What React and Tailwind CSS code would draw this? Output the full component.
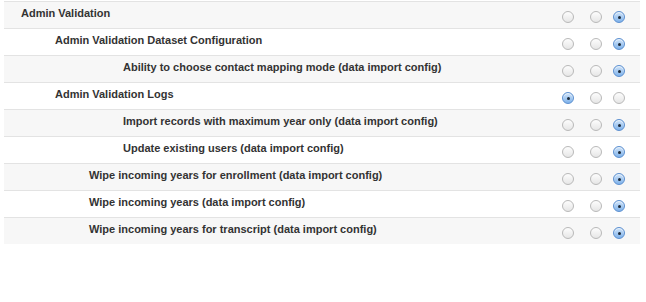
import React from "react";

const rows = [
  { label: "Admin Validation", indent: "pl-[17px]", checked: 2 },
  { label: "Admin Validation Dataset Configuration", indent: "pl-[51px]", checked: 2 },
  { label: "Ability to choose contact mapping mode (data import config)", indent: "pl-[119px]", checked: 2 },
  { label: "Admin Validation Logs", indent: "pl-[51px]", checked: 0 },
  { label: "Import records with maximum year only (data import config)", indent: "pl-[119px]", checked: 2 },
  { label: "Update existing users (data import config)", indent: "pl-[119px]", checked: 2 },
  { label: "Wipe incoming years for enrollment (data import config)", indent: "pl-[85px]", checked: 2 },
  { label: "Wipe incoming years (data import config)", indent: "pl-[85px]", checked: 2 },
  { label: "Wipe incoming years for transcript (data import config)", indent: "pl-[85px]", checked: 2 },
];

function Radio({ on }) {
  if (on) {
    return (
      <span className="flex h-[12px] w-[12px] items-center justify-center rounded-full border border-[#5b8fd0] bg-gradient-to-b from-[#cfe3f8] to-[#7fb2ea] shadow-[inset_0_1px_1px_rgba(255,255,255,0.7)]">
        <span className="h-[3px] w-[3px] rounded-full bg-[#1c2a3a]" />
      </span>
    );
  }
  return (
    <span className="block h-[12px] w-[12px] rounded-full border border-[#b9b9b9] bg-gradient-to-b from-[#fdfdfd] to-[#e6e6e6]" />
  );
}

export default function App() {
  return (
    <div className="h-[302px] w-[646px] bg-white pl-[4px] pr-[6px] pt-[1px] font-['Liberation_Sans',Arial,sans-serif]">
      <div className="flex flex-col">
        {rows.map((r, i) => (
          <div
            key={i}
            className={`flex h-[27px] items-center border-t border-[#e3e3e3] ${i % 2 === 0 ? "bg-[#f7f7f7]" : "bg-white"}`}
          >
            <div className={`flex-1 pb-[4px] text-[11px] font-bold text-[#333] ${r.indent}`}>{r.label}</div>
            <div className="flex items-center pt-[4px] pr-[15px]">
              <span className="w-[28px]"><Radio on={r.checked === 0} /></span>
              <span className="w-[23px]"><Radio on={r.checked === 1} /></span>
              <span className="w-[12px]"><Radio on={r.checked === 2} /></span>
            </div>
          </div>
        ))}
      </div>
    </div>
  );
}
